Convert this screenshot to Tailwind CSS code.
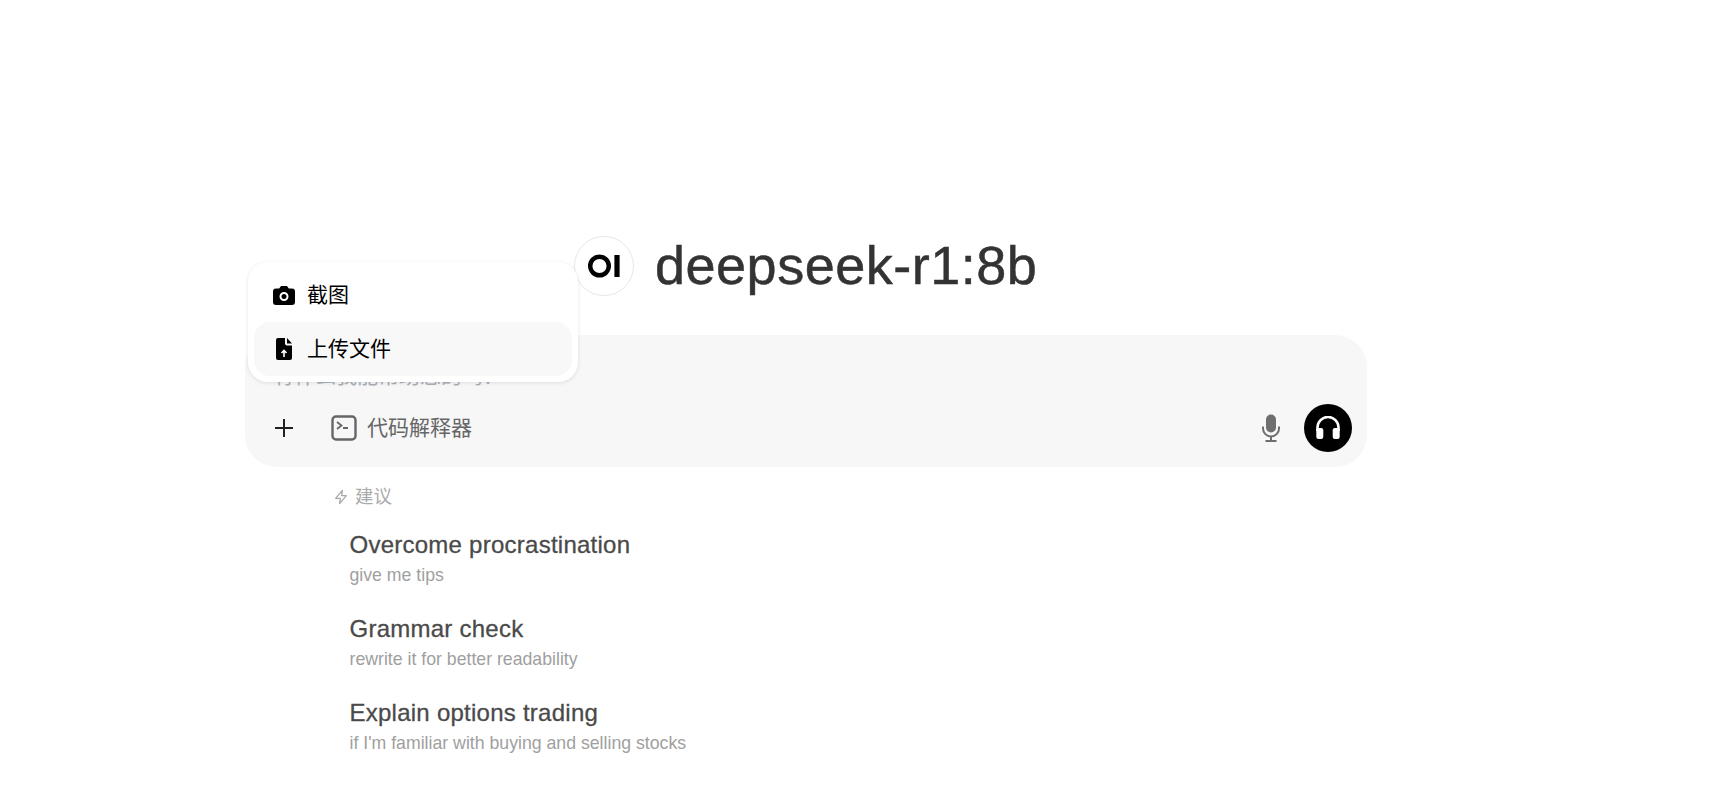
<!DOCTYPE html>
<html lang="en">
<head>
    <meta charset="UTF-8">
    <meta name="viewport" content="width=device-width, initial-scale=1.0">
    <title>deepseek-r1:8b</title>
    <script src="https://cdn.jsdelivr.net/npm/@tailwindcss/browser@4"></script>
</head>
<body class="bg-white h-[803px] overflow-hidden font-['Liberation_Sans','Noto_Sans_CJK_SC',sans-serif]">
    <main class="relative ml-[245px] w-[1122px] pt-[236px]">
        <!-- model title -->
        <div class="flex items-center h-[60px] pl-[329px] gap-[21px]">
            <div class="w-[60px] h-[60px] rounded-full border border-gray-200 bg-white flex items-center justify-center">
                <svg width="32" height="24" viewBox="0 0 32 24" fill="none">
                    <circle cx="11.500" cy="12" r="9.300" stroke="#000" stroke-width="4.400"/>
                    <rect x="26.400" y="1" width="5.200" height="22" fill="#000"/>
                </svg>
            </div>
            <h1 class="text-[54px] leading-none tracking-[0.5px] text-[#333333] [-webkit-text-stroke:0.5px_#333333] -mt-[2px]">deepseek-r1:8b</h1>
        </div>

        <!-- input card -->
        <div class="mt-[39px] h-[132px] rounded-[32px] bg-[#f7f7f7] px-[25px] flex flex-col">
            <div class="h-[69px] pt-[27px] pl-[3px] text-[21px] leading-[28px] text-[#a9afb8]">有什么我能帮助您的吗？</div>
            <div class="flex items-center h-[48px]">
                <button class="w-[28px] h-[28px] flex items-center justify-center text-[#222]">
                    <svg width="20" height="20" viewBox="0 0 20 20" fill="none" stroke="currentColor" stroke-width="2">
                        <path d="M10 1v18M1 10h18"/>
                    </svg>
                </button>
                <button class="ml-[33px] flex items-center gap-[10px] text-[21px] text-[#666]">
                    <svg width="26" height="26" viewBox="0 0 26 26" fill="none" stroke="#666" stroke-width="2.400">
                        <rect x="1.500" y="1.500" width="23" height="23" rx="3.500"/>
                        <path d="M6 7l4.500 3.500L6 14M12 13h5" stroke-width="1.800"/>
                    </svg>
                    代码解释器
                </button>
                <div class="ml-auto flex items-center gap-[23px] mr-[-10px]">
                    <svg width="20" height="28" viewBox="0 0 20 28" fill="#6e6e6e">
                        <rect x="5" y="0.500" width="10" height="18" rx="5"/>
                        <path d="M2 12.500v2a8 8 0 0 0 16 0v-2" fill="none" stroke="#6e6e6e" stroke-width="2"/>
                        <path d="M10 23v4M4.500 27h11" fill="none" stroke="#6e6e6e" stroke-width="2"/>
                    </svg>
                    <button class="w-[48px] h-[48px] rounded-full bg-black flex items-center justify-center">
                        <svg width="24" height="24" viewBox="0 0 24 24" fill="none">
                            <path d="M1.500 15v-3.500a10.500 10.500 0 0 1 21 0V15" stroke="#fff" stroke-width="2.600"/>
                            <rect x="0.300" y="12" width="7" height="11" rx="2.200" fill="#fff"/>
                            <rect x="16.700" y="12" width="7" height="11" rx="2.200" fill="#fff"/>
                        </svg>
                    </button>
                </div>
            </div>
        </div>

        <!-- attachment menu -->
        <div class="absolute left-[3px] top-[262px] w-[330px] h-[120px] rounded-[20px] bg-white shadow-[0_1px_4px_rgba(0,0,0,0.1)] p-[6px] flex flex-col text-[21px] text-black">
            <div class="h-[54px] flex items-center gap-[11px] px-[18px]">
                <svg width="24" height="24" viewBox="0 0 24 24" fill="#000">
                    <path fill-rule="evenodd" d="M9 3h6l1.800 2.600H20a3 3 0 0 1 3 3V19a3 3 0 0 1-3 3H4a3 3 0 0 1-3-3V8.600a3 3 0 0 1 3-3h3.200zM12 9a4.500 4.500 0 1 0 0 9 4.500 4.500 0 0 0 0-9zm0 2a2.500 2.500 0 1 1 0 5 2.500 2.500 0 0 1 0-5z"/>
                </svg>
                截图
            </div>
            <div class="h-[54px] flex items-center gap-[11px] px-[18px] rounded-[16px] bg-[#f8f8f8]">
                <svg width="24" height="22" viewBox="-2 0 24 22" fill="#000">
                    <path d="M4 0h7v5.500a2 2 0 0 0 2 2h5V20a2 2 0 0 1-2 2H4a2 2 0 0 1-2-2V2a2 2 0 0 1 2-2z"/>
                    <path d="M13 0l5 5.500h-5z"/>
                    <path d="M10 19v-6M7.500 15l2.500-2.500 2.500 2.500" fill="none" stroke="#fff" stroke-width="1.600"/>
                </svg>
                上传文件
            </div>
        </div>

        <!-- suggestions -->
        <section class="pl-[88px] pt-[18px]">
            <div class="flex items-center gap-[6px] h-[24px] text-[18.500px] text-[#aaaaaa]">
                <svg width="16" height="18" viewBox="0 0 24 24" fill="none" stroke="#aaaaaa" stroke-width="2" stroke-linejoin="round">
                    <path d="M14 2L4 14h7l-1 8 10-12h-7z"/>
                </svg>
                建议
            </div>
            <div class="pl-[16.500px] pt-[19px] flex flex-col gap-[22px]">
                <div class="h-[62px]">
                    <div class="text-[24px] leading-[34px] tracking-[0.25px] text-[#4a4a4a] [-webkit-text-stroke:0.3px_#4a4a4a]">Overcome procrastination</div>
                    <div class="text-[17.700px] leading-[26px] text-[#a0a0a0]">give me tips</div>
                </div>
                <div class="h-[62px]">
                    <div class="text-[24px] leading-[34px] tracking-[0.25px] text-[#4a4a4a] [-webkit-text-stroke:0.3px_#4a4a4a]">Grammar check</div>
                    <div class="text-[17.700px] leading-[26px] text-[#a0a0a0]">rewrite it for better readability</div>
                </div>
                <div class="h-[62px]">
                    <div class="text-[24px] leading-[34px] tracking-[0.25px] text-[#4a4a4a] [-webkit-text-stroke:0.3px_#4a4a4a]">Explain options trading</div>
                    <div class="text-[17.700px] leading-[26px] text-[#a0a0a0]">if I'm familiar with buying and selling stocks</div>
                </div>
            </div>
        </section>
    </main>
</body>
</html>
